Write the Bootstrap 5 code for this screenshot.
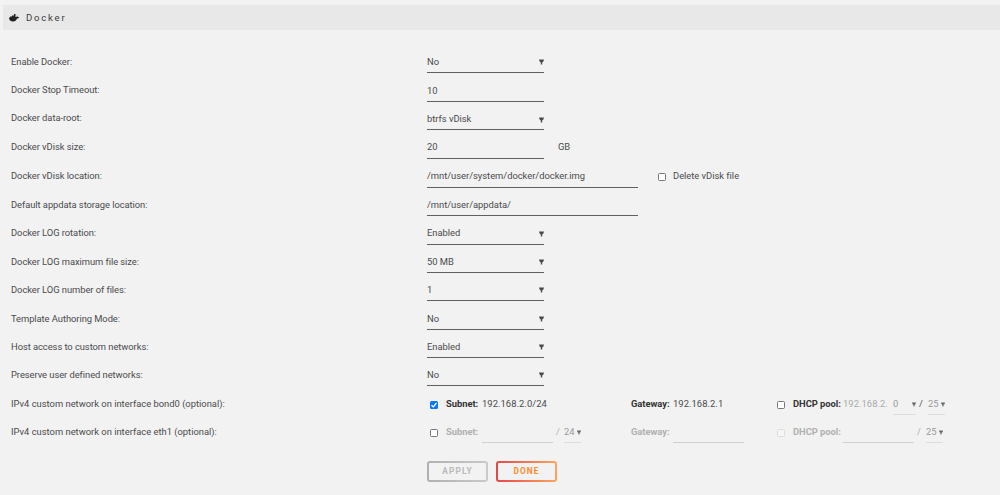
<!DOCTYPE html>
<html lang="en">
<head>
<meta charset="utf-8">
<title>Docker</title>
<link href="https://cdn.jsdelivr.net/npm/bootstrap@5.3.0/dist/css/bootstrap.min.css" rel="stylesheet">
<style>
body{background:#f2f2f2;color:#4a4a4c;font:9.4px/12px Roboto,"Noto Sans",sans-serif;letter-spacing:-.02px;overflow:hidden}
.title-bar{margin:5px 0 0 3px;height:25px;padding-left:6px;background:#e8e8e8;color:#3c3c3c;font-size:9.6px;letter-spacing:1.5px}
.title-bar svg{width:10px;height:8px;margin-right:7px}
.settings{padding:15px 0 0 11px}
.set-row{height:28px;display:grid;grid-template-columns:416px 1fr;align-items:end}
.set-row.tall{height:29px}
.set-name{padding-bottom:5px;letter-spacing:-.06px}
.set-name.net-name{letter-spacing:0}
.field{width:117px;height:18px;border-bottom:1px solid #606062;padding:1px 0 4px 0;white-space:nowrap}
.field.wide{width:211px}
.raised .set-name,.raised .aside{padding-bottom:6px}
.raised .field{padding-top:0;padding-bottom:5px}
.raised .arrow{margin-top:4px}
.arrow{width:5px;height:6px;margin-top:3px;flex:none}
.aside{padding-bottom:5px}
.cb{appearance:none;width:8px;height:8px;margin:0;border:1px solid #777;border-radius:1.5px;background:#fff;flex:none}
.aside .cb{margin-top:2px}
.cb:disabled{border-color:#ddd;background:#f5f5f5}
.cb:checked{border:0;background:#0b75ff url("data:image/svg+xml,%3Csvg xmlns='http://www.w3.org/2000/svg' viewBox='0 0 8 8'%3E%3Cpath d='M1.5 4.2l1.8 1.7L6.5 2' fill='none' stroke='%23fff' stroke-width='1.3'/%3E%3C/svg%3E")}
.net{display:grid;grid-template-columns:201px 146px 1fr;height:17px;padding-left:3px;white-space:nowrap}
.net>div{display:flex;align-items:flex-start}
.net .cb{margin:3px 8px 0 0}
.net b{font-weight:700;color:#333;letter-spacing:-.04px}
.net b.s{width:36px}.net b.g{width:42px}.net b.p{width:50px}
.addr{letter-spacing:.06px}
.off,.off b{color:#b0b0b0!important}
.blank{width:71px;height:17px;border-bottom:1px solid #d0d0d0}
.slash{width:12px;padding-left:3px}
.slash.near{width:11px}
.mini{width:17px;height:17px;border-bottom:1px solid #dcdcdc;display:flex;justify-content:space-between;color:#999}
.mini.host{width:23px}
.mini .arrow{margin-top:4px;color:#666;width:4px;height:5px}
.btns{padding:18px 0 0 416px;gap:8px}
.ctl{width:61px;height:21px;border:2px solid transparent;border-radius:3px;padding:0;font-size:8.3px;line-height:17px;font-weight:700;letter-spacing:1.1px;text-align:center}
.ctl.apply{color:#b9b9b9;background:linear-gradient(#f2f2f2,#f2f2f2) padding-box,linear-gradient(90deg,#b0b0b0,#cacaca) border-box}
.ctl.done{color:#ff8c2f;background:linear-gradient(#f2f2f2,#f2f2f2) padding-box,linear-gradient(90deg,#e5484a,#ffa45c) border-box}
</style>
</head>
<body>
<svg class="d-none"><symbol id="arr" viewBox="0 0 5 6"><path d="M0 .5h5L4.4 2.6 3.2 3.4V5.5H1.8V3.4L.6 2.6z" fill="currentColor"/></symbol></svg>
<header class="title-bar d-flex align-items-center">
<svg viewBox="0 0 20 16"><path d="M0 7h2V5h4V3h4V0h3v6h2c1 0 0-2 1-3 1 1 1 2 1 3h3c0 2-2 3-4 3-1 4-4 6-8 6-5 0-8-3-8-8z" fill="#222"/></svg>
<span style="letter-spacing:1.75px">Docker</span>
</header>
<main class="settings">
<div class="set-row"><div class="set-name">Enable Docker:</div><div class="field d-flex justify-content-between">No<svg class="arrow"><use href="#arr"/></svg></div></div>
<div class="set-row tall"><div class="set-name pb-0 mb-0 align-self-end" style="padding-bottom:6px!important">Docker Stop Timeout:</div><div class="field">10</div></div>
<div class="set-row raised"><div class="set-name">Docker data-root:</div><div class="field d-flex justify-content-between pt-0" style="padding-top:1px!important">btrfs vDisk<svg class="arrow"><use href="#arr"/></svg></div></div>
<div class="set-row tall raised"><div class="set-name">Docker vDisk size:</div><div class="d-flex align-items-end"><div class="field">20</div><span class="aside" style="margin-left:14px">GB</span></div></div>
<div class="set-row tall raised"><div class="set-name">Docker vDisk location:</div><div class="d-flex align-items-end"><div class="field wide">/mnt/user/system/docker/docker.img</div><label class="aside d-flex align-items-center" style="margin-left:20px;gap:7px"><input class="cb" type="checkbox">Delete vDisk file</label></div></div>
<div class="set-row"><div class="set-name">Default appdata storage location:</div><div class="field wide">/mnt/user/appdata/</div></div>
<div class="set-row tall raised"><div class="set-name">Docker LOG rotation:</div><div class="field d-flex justify-content-between">Enabled<svg class="arrow"><use href="#arr"/></svg></div></div>
<div class="set-row"><div class="set-name">Docker LOG maximum file size:</div><div class="field d-flex justify-content-between">50 MB<svg class="arrow"><use href="#arr"/></svg></div></div>
<div class="set-row"><div class="set-name">Docker LOG number of files:</div><div class="field d-flex justify-content-between">1<svg class="arrow"><use href="#arr"/></svg></div></div>
<div class="set-row tall"><div class="set-name">Template Authoring Mode:</div><div class="field d-flex justify-content-between">No<svg class="arrow"><use href="#arr"/></svg></div></div>
<div class="set-row"><div class="set-name">Host access to custom networks:</div><div class="field d-flex justify-content-between">Enabled<svg class="arrow"><use href="#arr"/></svg></div></div>
<div class="set-row"><div class="set-name">Preserve user defined networks:</div><div class="field d-flex justify-content-between">No<svg class="arrow"><use href="#arr"/></svg></div></div>
<div class="set-row tall"><div class="set-name net-name">IPv4 custom network on interface bond0 (optional):</div>
<div class="net"><div><input class="cb" type="checkbox" checked><b class="s">Subnet:</b><span class="addr">192.168.2.0/24</span></div><div><b class="g">Gateway:</b><span class="addr">192.168.2.1</span></div><div><input class="cb" type="checkbox"><b class="p">DHCP pool:</b><span class="addr" style="width:50px;color:#aaa">192.168.2.</span><span class="mini host">0<svg class="arrow"><use href="#arr"/></svg></span><span class="slash">/</span><span class="mini">25<svg class="arrow"><use href="#arr"/></svg></span></div></div></div>
<div class="set-row"><div class="set-name net-name">IPv4 custom network on interface eth1 (optional):</div>
<div class="net off"><div><input class="cb" type="checkbox"><b class="s">Subnet:</b><span class="blank"></span><span class="slash near">/</span><span class="mini">24<svg class="arrow"><use href="#arr"/></svg></span></div><div><b class="g">Gateway:</b><span class="blank"></span></div><div><input class="cb" type="checkbox" disabled><b class="p">DHCP pool:</b><span class="blank"></span><span class="slash">/</span><span class="mini">25<svg class="arrow"><use href="#arr"/></svg></span></div></div></div>
<div class="btns d-flex"><button class="ctl apply" disabled>APPLY</button><button class="ctl done">DONE</button></div>
</main>
<script src="https://cdn.jsdelivr.net/npm/bootstrap@5.3.0/dist/js/bootstrap.bundle.min.js"></script>
</body>
</html>
